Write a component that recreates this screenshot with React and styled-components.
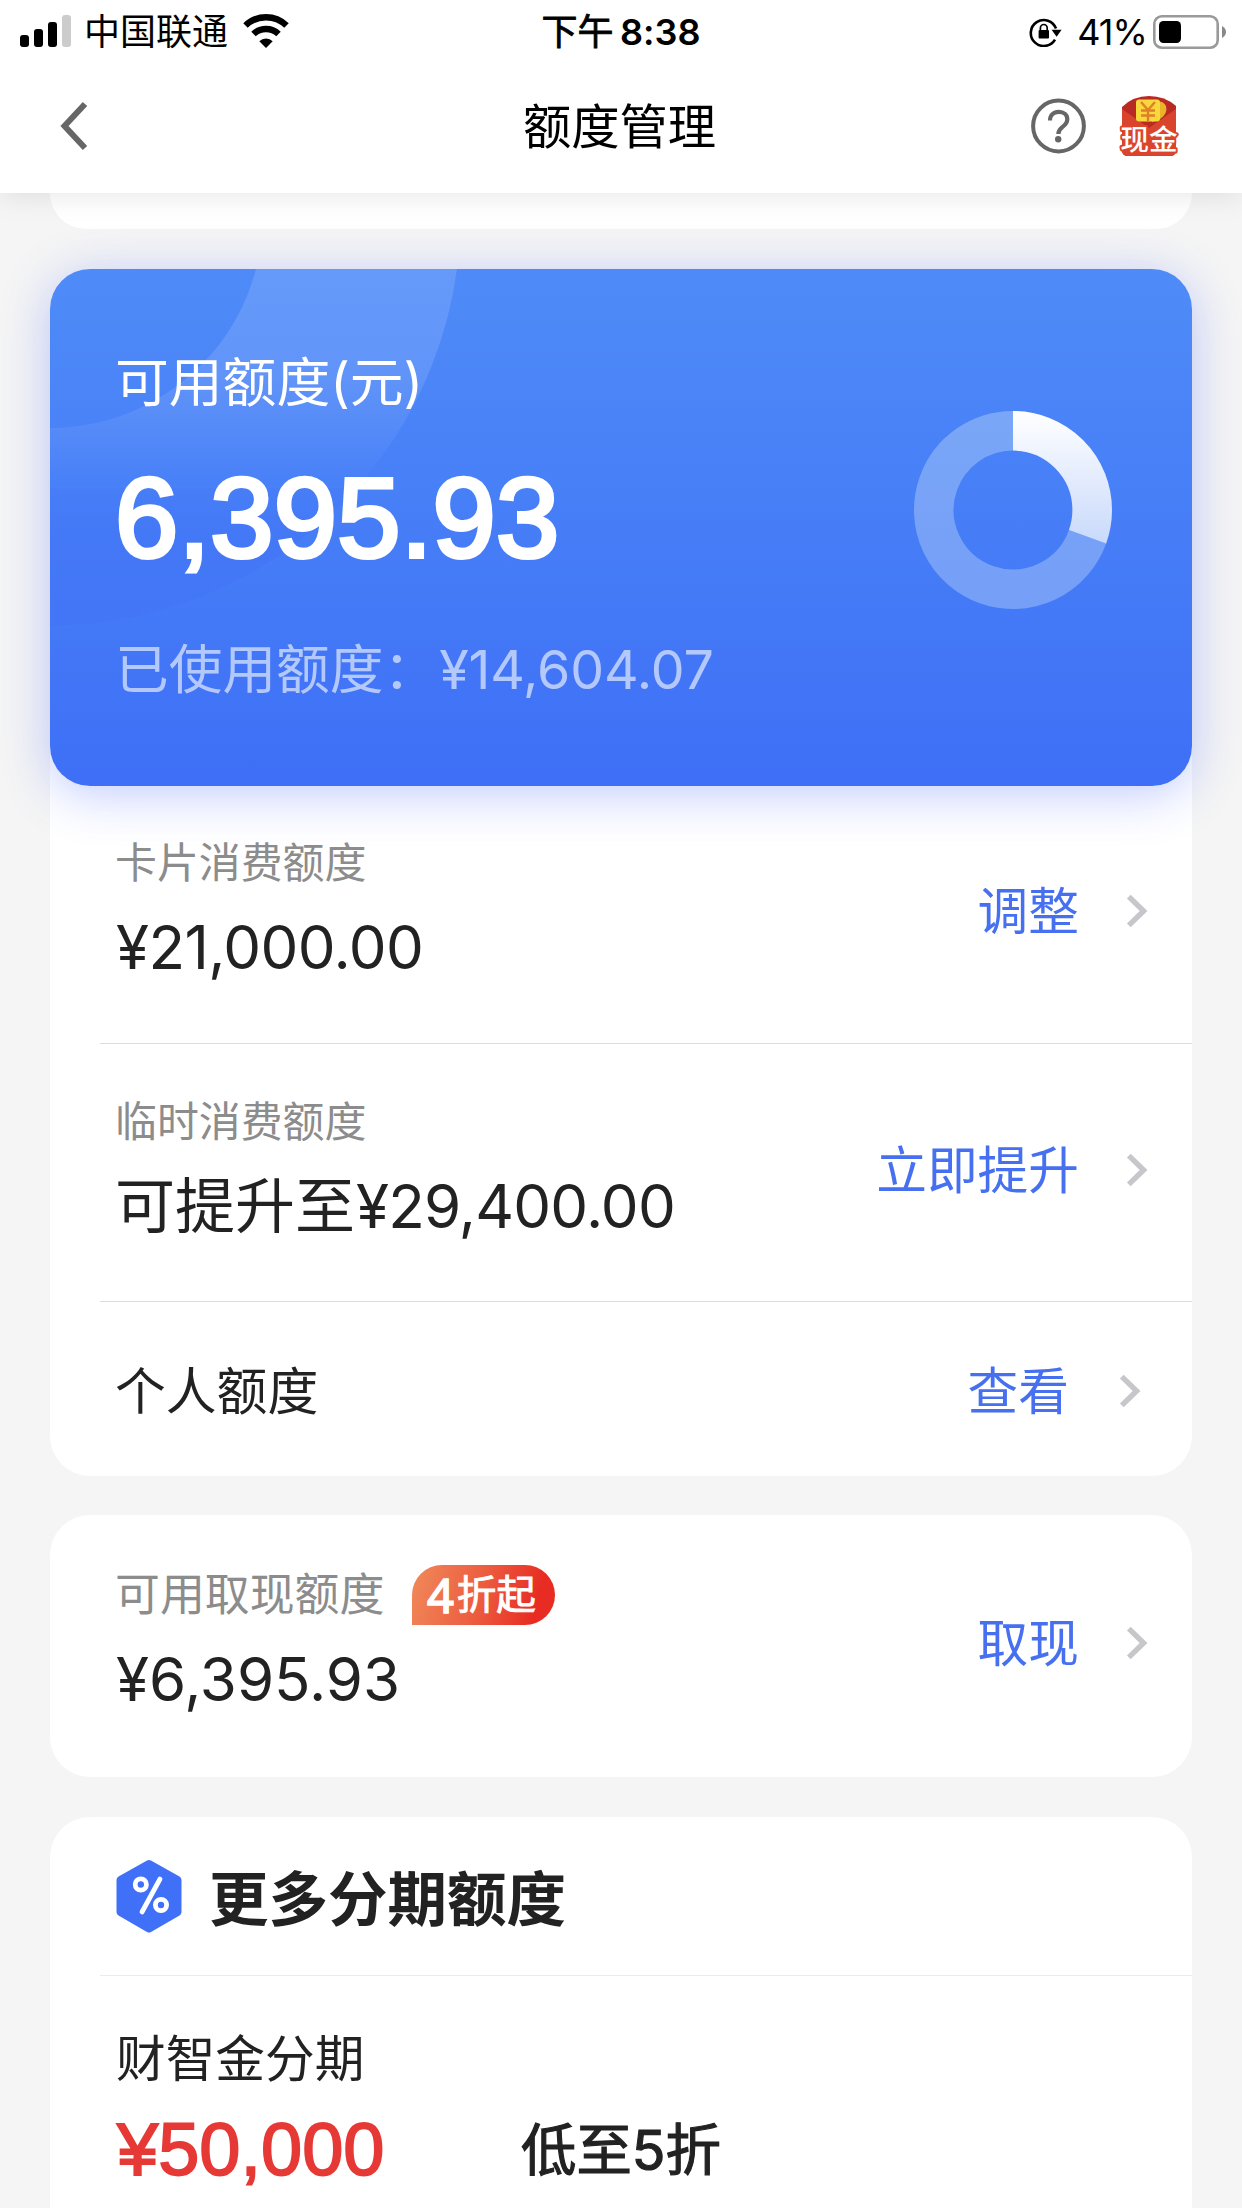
import React from 'react';
import styled, { createGlobalStyle } from 'styled-components';

const GlobalStyle = createGlobalStyle`
  * {
    box-sizing: border-box;
  }

  body {
    margin: 0;
    background: #f5f5f5;
    color: #222;
    font-family: Inter, 'Noto Sans CJK SC', sans-serif;
    font-feature-settings: 'calt' 0;
  }

  svg {
    display: block;
    flex: none;
  }
`;

const Page = styled.div`
  width: 1242px;
  height: 2208px;
  overflow: hidden;
  background: #f5f5f5;
`;

const Header = styled.header`
  position: relative;
  z-index: 2;
  height: 193px;
  background: #fff;
  box-shadow: 0 2px 28px rgba(0, 0, 0, 0.1);
`;

const StatusBar = styled.div`
  display: grid;
  grid-template-columns: 1fr auto 1fr;
  align-items: center;
  height: 62px;
  padding: 0 15px 0 20px;
  color: #000;
`;

const StatusGroup = styled.div`
  display: flex;
  align-items: center;
  justify-content: ${({ $end }) => ($end ? 'flex-end' : 'flex-start')};
`;

const Carrier = styled.span`
  margin: 0 15px 0 12px;
  padding-top: 1px;
  font-size: 36px;
  line-height: 62px;
`;

const Clock = styled.span`
  padding-right: 5px;
  font-size: 36px;
  font-weight: 600;
  line-height: 62px;
  word-spacing: -2.5px;
`;

const ClockPeriod = styled.span`
  font-weight: 400;
  -webkit-text-stroke: 0.8px #000;
`;

const Battery = styled.span`
  margin: 0 6px 0 14px;
  font-size: 36px;
  line-height: 62px;
  letter-spacing: -0.9px;
`;

const NavBar = styled.nav`
  display: grid;
  grid-template-columns: 1fr auto 1fr;
  align-items: center;
  height: 128px;
  padding: 0 63px 0 60px;
`;

const NavTitle = styled.h1`
  margin: 2px 0 0;
  color: #000;
  font-size: 48.3px;
  font-weight: 400;
  line-height: 60px;
`;

const NavActions = styled.div`
  display: flex;
  align-items: center;
  justify-content: flex-end;
  gap: 33px;
`;

const Content = styled.main`
  padding: 0 50px;
`;

const Card = styled.section`
  overflow: hidden;
  margin-top: ${({ $gap }) => $gap || 0}px;
  border-radius: 40px;
  background: #fff;
`;

const PreviousCard = styled.div`
  height: 36px;
  border-radius: 0 0 40px 40px;
  background: #fff;
`;

const BalanceCard = styled.section`
  position: relative;
  z-index: 1;
  display: flex;
  justify-content: space-between;
  height: 517px;
  margin-top: 40px;
  padding: 84px 80px 0 65px;
  border-radius: 40px;
  background: linear-gradient(180deg, #4f8bf8 0%, #477ff7 45%, #3e6ff6 100%);
  box-shadow: 0 8px 50px rgba(62, 92, 250, 0.32);
  color: #fff;
`;

const Backdrop = styled.svg`
  position: absolute;
  top: 0;
  left: 0;
  border-radius: 40px;
`;

const BalanceInfo = styled.div`
  position: relative;
`;

const BalanceLabel = styled.div`
  font-size: 53.8px;
  line-height: 60px;
`;

const BalanceAmount = styled.div`
  margin: 49px 0 66px 0;
  font-family: 'Liberation Sans', Arial, sans-serif;
  font-size: 113.6px;
  line-height: 112px;
  letter-spacing: 0.3px;
  -webkit-text-stroke: 4.2px #fff;
`;

const BalanceUsed = styled.div`
  color: rgba(255, 255, 255, 0.6);
  font-size: 53.7px;
  line-height: 60px;
  white-space: nowrap;
`;

const UsedAmount = styled.span`
  margin-left: 2px;
  letter-spacing: -0.1px;
`;

const Donut = styled.svg`
  position: relative;
  margin-top: 58px;
`;

const QuotaList = styled.section`
  margin-top: -46px;
  padding-top: 46px;
  border-radius: 0 0 40px 40px;
  background: #fff;
`;

const Row = styled.div`
  display: flex;
  align-items: center;
  justify-content: space-between;
  height: ${({ $height }) => $height}px;
  margin-left: 50px;
  padding: ${({ $shift }) => $shift || '0 0 7px'};
  padding-left: 15px;
  padding-right: ${({ $inset }) => $inset || 43}px;
  border-bottom: ${({ $last }) => ($last ? 'none' : '1px solid #dcdcdc')};
`;

const RowLabel = styled.div`
  display: flex;
  align-items: center;
  height: 48px;
  margin-bottom: 24px;
  color: #8c8c8c;
  font-size: ${({ $size }) => $size || 41.9}px;
  line-height: 48px;
`;

const RowAmount = styled.div`
  font-size: 60px;
  line-height: 72px;
`;

const Figure = styled.span`
  margin-left: 1px;
  letter-spacing: ${({ $tracking }) => $tracking || 0}px;
`;

const RowTitle = styled.div`
  padding-top: 1px;
  font-size: 50.8px;
  line-height: 60px;
`;

const Action = styled.a`
  display: flex;
  align-items: center;
  gap: ${({ $gap }) => $gap || 47}px;
  color: #4670f0;
  font-size: 50.7px;
  line-height: 60px;
`;

const ActionText = styled.span`
  padding-top: 2px;
`;

const Badge = styled.span`
  display: flex;
  align-items: center;
  justify-content: center;
  width: 143px;
  height: 60px;
  margin-left: 28px;
  padding-right: 5px;
  border-radius: 30px 30px 30px 0;
  background: linear-gradient(105deg, #f08a5a 0%, #ec5a3e 50%, #e82c23 85%);
  color: #fff;
  font-size: 39.5px;
  line-height: 60px;
  -webkit-text-stroke: 0.9px #fff;
`;

const BadgeNumber = styled.span`
  margin-right: 3px;
  font-family: 'Noto Sans', sans-serif;
  font-size: 47px;
  -webkit-text-stroke: 1.6px #fff;
`;

const SectionHead = styled.div`
  display: flex;
  align-items: center;
  gap: 26px;
  height: 159px;
  margin-left: 50px;
  padding-left: 15px;
  border-bottom: 1px solid #ebebeb;
`;

const SectionTitle = styled.h2`
  margin: 6px 0 0;
  font-size: 59.5px;
  font-weight: 700;
  line-height: 72px;
`;

const Offer = styled.div`
  height: 300px;
  padding: 53px 66px 0;
`;

const OfferName = styled.div`
  font-size: 49.7px;
  line-height: 60px;
`;

const OfferDetail = styled.div`
  display: flex;
  align-items: center;
  height: 80px;
  margin-top: 21px;
`;

const OfferAmount = styled.div`
  width: 405px;
  padding-left: 1px;
  color: #e63935;
  font-family: 'Liberation Sans', Arial, sans-serif;
  font-size: 74px;
  line-height: 80px;
  -webkit-text-stroke: 1.8px #e63935;
`;

const OfferRate = styled.div`
  font-size: 55.4px;
  line-height: 80px;
  -webkit-text-stroke: 1.2px #222;
`;

const SignalIcon = () => (
  <svg width="52" height="34" viewBox="0 0 52 34">
    <rect x="0" y="20" width="9" height="12" rx="3" />
    <rect x="14" y="14" width="9" height="18" rx="3" />
    <rect x="28" y="7" width="9" height="25" rx="3" />
    <rect x="42" y="0" width="9" height="32" rx="3" fill="#ccc" />
  </svg>
);

const WifiIcon = () => (
  <svg width="46" height="36" viewBox="0 0 46 36" fill="none" stroke="#000" strokeWidth="6.4">
    <path d="M2.5 11.5a29.5 29.5 0 0 1 41 0" />
    <path d="M10.5 20a18 18 0 0 1 25 0" />
    <path d="M16.3 27.2a9.6 9.6 0 0 1 13.4 0L23 34z" fill="#000" stroke="none" />
  </svg>
);

const RotationLockIcon = () => (
  <svg width="34" height="30" viewBox="0 0 34 30" fill="none" stroke="#000" strokeWidth="2.6">
    <path d="M26 22.6A13 13 0 1 1 27 11.5" />
    <path d="M22.6 12.7h10l-5 7z" fill="#000" stroke="none" />
    <rect x="9.6" y="13" width="10.4" height="8.6" rx="1" fill="#000" stroke="none" />
    <path d="M11.4 13.5v-2.6a3.4 3.4 0 0 1 6.8 0v2.6" strokeWidth="1.7" />
  </svg>
);

const BatteryIcon = () => (
  <svg width="74" height="34" viewBox="0 0 74 34">
    <rect x="1.3" y="1.3" width="63.4" height="31.4" rx="7.5" fill="none" stroke="#999" strokeWidth="2.6" />
    <rect x="6" y="6" width="22" height="22" rx="4.5" />
    <path d="M69 11q4 2.4 4 6t-4 6z" fill="#888" />
  </svg>
);

const BackIcon = () => (
  <svg width="28" height="50" viewBox="0 0 28 50" fill="none" stroke="#666" strokeWidth="6">
    <path d="M25 3 4.5 25 25 47" />
  </svg>
);

const HelpIcon = () => (
  <svg width="55" height="56" viewBox="0 0 55 56" fill="none" stroke="#666">
    <circle cx="27.5" cy="28" r="25.4" strokeWidth="4" />
    <path
      d="M19 22.4c0-5.2 3.5-8.6 8.7-8.6 5 0 8.6 3.1 8.6 7.5 0 3.4-1.8 5.4-4.7 7.6-3 2.2-4.2 3.7-4.2 7.2"
      strokeWidth="4.2"
    />
    <circle cx="27.2" cy="41.2" r="3.2" fill="#666" stroke="none" />
  </svg>
);

const CashIcon = () => (
  <svg width="60" height="61" viewBox="0 0 60 61">
    <path d="M3 11Q14 0 30 0t27 10v44q0 6-6 6H9q-6 0-6-6z" fill="#b92a22" />
    <path d="M3 13l27 19 27-19v41q0 6-6 6H9q-6 0-6-6z" fill="#d8452c" />
    <path d="M34 7q9-4 13 3 2 8-6 13l-8 3z" fill="#e9b32c" />
    <rect x="17" y="3.5" width="24" height="22" rx="3" fill="#f8d83c" />
    <g fill="none" stroke="#e07f28" strokeWidth="2.4">
      <path d="M22 6l7 8 7-8M29 13v12M22 14.5h14M22 19.5h14" />
    </g>
    <text
      x="30"
      y="53.5"
      fill="#fff"
      stroke="#dc452c"
      strokeWidth="4"
      strokeLinejoin="round"
      paintOrder="stroke"
      textAnchor="middle"
      fontSize="28.5"
      fontWeight="500">
      现金
    </text>
  </svg>
);

const ChevronIcon = () => (
  <svg width="23" height="34" viewBox="0 0 23 34" fill="none" stroke="#c7c7cb" strokeWidth="5.4">
    <path d="M2.8 2.6 17.6 17 2.8 31.4" />
  </svg>
);

const PercentIcon = () => (
  <svg width="68" height="74" viewBox="0 0 68 74">
    <path
      d="M34 5 62.5 21V53L34 69.5 5.5 53V21z"
      fill="#4070f8"
      stroke="#4070f8"
      strokeWidth="8"
      strokeLinejoin="round"
    />
    <g fill="none" stroke="#fff" strokeWidth="4.8" strokeLinecap="round">
      <circle cx="25.8" cy="25.5" r="5.6" />
      <circle cx="46" cy="46" r="5.6" />
      <path d="M45 20 27 53" />
    </g>
  </svg>
);

// Share of the limit that is still available
const RADIUS = 79.2;
const CIRCUMFERENCE = 2 * Math.PI * RADIUS;
const available = 6395.93 / 21000;

const LimitChart = () => (
  <Donut width="198" height="198" viewBox="0 0 198 198">
    <defs>
      <linearGradient id="arc" gradientUnits="userSpaceOnUse" x1="64" y1="0" x2="198" y2="0">
        <stop offset="0" stopColor="#c8d9fb" />
        <stop offset="1" stopColor="#fff" />
      </linearGradient>
    </defs>
    <g fill="none" strokeWidth="39.6" transform="rotate(-90 99 99)">
      <circle
        cx="99"
        cy="99"
        r={RADIUS}
        stroke="rgba(225, 240, 250, 0.32)"
        strokeDasharray={`${CIRCUMFERENCE * (1 - available)} ${CIRCUMFERENCE}`}
        transform={`rotate(${available * 360} 99 99)`}
      />
      <circle
        cx="99"
        cy="99"
        r={RADIUS}
        stroke="url(#arc)"
        strokeDasharray={`${CIRCUMFERENCE * available} ${CIRCUMFERENCE}`}
      />
    </g>
  </Donut>
);

const BalanceBackdrop = () => (
  <Backdrop width="1142" height="517" viewBox="0 0 1142 517">
    <defs>
      <linearGradient id="ring" gradientUnits="userSpaceOnUse" x1="0" y1="0" x2="0" y2="360">
        <stop offset="0" stopColor="#fff" stopOpacity="0.13" />
        <stop offset="0.3" stopColor="#fff" stopOpacity="0.12" />
        <stop offset="0.6" stopColor="#fff" stopOpacity="0" />
        <stop offset="0.61" stopColor="#3a62f5" stopOpacity="0.05" />
        <stop offset="0.75" stopColor="#3a62f5" stopOpacity="0.2" />
        <stop offset="1" stopColor="#3a62f5" stopOpacity="0.08" />
      </linearGradient>
    </defs>
    <circle cx="0" cy="-54" r="311.7" fill="none" stroke="url(#ring)" strokeWidth="197.5" />
  </Backdrop>
);

const App = () => (
  <Page>
    <GlobalStyle />
    <Header>
      <StatusBar>
        <StatusGroup>
          <SignalIcon />
          <Carrier>中国联通</Carrier>
          <WifiIcon />
        </StatusGroup>
        <Clock>
          <ClockPeriod>下午</ClockPeriod> 8:38
        </Clock>
        <StatusGroup $end>
          <RotationLockIcon />
          <Battery>41%</Battery>
          <BatteryIcon />
        </StatusGroup>
      </StatusBar>
      <NavBar>
        <BackIcon />
        <NavTitle>额度管理</NavTitle>
        <NavActions>
          <HelpIcon />
          <CashIcon />
        </NavActions>
      </NavBar>
    </Header>

    <Content>
      <PreviousCard />

      <BalanceCard>
        <BalanceBackdrop />
        <BalanceInfo>
          <BalanceLabel>可用额度(元)</BalanceLabel>
          <BalanceAmount>6,395.93</BalanceAmount>
          <BalanceUsed>
            已使用额度：<UsedAmount>¥14,604.07</UsedAmount>
          </BalanceUsed>
        </BalanceInfo>
        <LimitChart />
      </BalanceCard>

      <QuotaList>
        <Row $height={258}>
          <div>
            <RowLabel>卡片消费额度</RowLabel>
            <RowAmount>
              <Figure $tracking={-0.6}>¥21,000.00</Figure>
            </RowAmount>
          </div>
          <Action>
            <ActionText>调整</ActionText>
            <ChevronIcon />
          </Action>
        </Row>
        <Row $height={258} $shift="0 0 6px">
          <div>
            <RowLabel>临时消费额度</RowLabel>
            <RowAmount>
              可提升至<Figure $tracking={-0.8}>¥29,400.00</Figure>
            </RowAmount>
          </div>
          <Action>
            <ActionText>立即提升</ActionText>
            <ChevronIcon />
          </Action>
        </Row>
        <Row $height={174} $shift="4px 0 0" $inset={50} $last>
          <RowTitle>个人额度</RowTitle>
          <Action $gap={50}>
            <ActionText>查看</ActionText>
            <ChevronIcon />
          </Action>
        </Row>
      </QuotaList>

      <Card $gap={39}>
        <Row $height={262} $last>
          <div>
            <RowLabel $size={44.9}>
              可用取现额度
              <Badge>
                <BadgeNumber>4</BadgeNumber>折起
              </Badge>
            </RowLabel>
            <RowAmount>
              <Figure>¥6,395.93</Figure>
            </RowAmount>
          </div>
          <Action>
            <ActionText>取现</ActionText>
            <ChevronIcon />
          </Action>
        </Row>
      </Card>

      <Card $gap={40}>
        <SectionHead>
          <PercentIcon />
          <SectionTitle>更多分期额度</SectionTitle>
        </SectionHead>
        <Offer>
          <OfferName>财智金分期</OfferName>
          <OfferDetail>
            <OfferAmount>¥50,000</OfferAmount>
            <OfferRate>低至5折</OfferRate>
          </OfferDetail>
        </Offer>
      </Card>
    </Content>
  </Page>
);

export default App;
